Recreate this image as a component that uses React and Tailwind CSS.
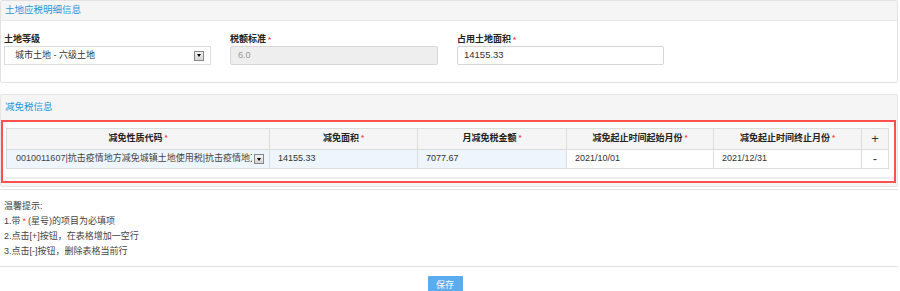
import React from 'react';

const Star = () => <span className="text-[#ff3b3b] ml-[2px] text-[8px] align-top">*</span>;

const DropBtn = () => (
  <span className="inline-flex shrink-0 items-center justify-center w-[10px] h-[10px] border border-[#888] bg-gradient-to-b from-[#f4f4f4] to-[#d4d4d4]">
    <span className="block w-0 h-0 border-l-[2.5px] border-r-[2.5px] border-t-[3px] border-l-transparent border-r-transparent border-t-black" />
  </span>
);

const App = () => {
  const cols = [
    { w: 'w-[263px]', title: '减免性质代码' },
    { w: 'w-[148px]', title: '减免面积' },
    { w: 'w-[149px]', title: '月减免税金额' },
    { w: 'w-[147px]', title: '减免起止时间起始月份' },
    { w: 'w-[148px]', title: '减免起止时间终止月份' },
  ];

  return (
    <div className="w-[900px] h-[291px] overflow-hidden bg-white text-[9px] text-[#333] font-['Liberation_Sans','Noto_Sans_CJK_SC',sans-serif]">
      {/* 土地应税明细信息 */}
      <div className="w-[898px] h-[83px] border border-[#e3e3e3] rounded-[2px]">
        <div className="h-[20px] bg-[#f5f5f5] border-b border-[#e8e8e8] pl-[4px] flex items-center">
          <span className="text-[#1f97dc] text-[9.5px]">土地应税明细信息</span>
        </div>
        <div className="flex pl-[3px] pt-[13px] gap-[19px]">
          <div className="w-[207px]">
            <div className="h-[11px] leading-[11px] text-[#222] font-bold">土地等级</div>
            <div className="mt-[1px] h-[19px] border border-[#ddd] flex items-center justify-between pl-[10px] pr-[6px]">
              <span>城市土地 - 六级土地</span>
              <DropBtn />
            </div>
          </div>
          <div className="w-[208px]">
            <div className="h-[11px] leading-[11px] text-[#222] font-bold">税额标准<Star /></div>
            <div className="mt-[1px] h-[19px] border border-[#d6d6d6] bg-[#eeeeee] rounded-[2px] flex items-center pl-[7px] text-[#999]">6.0</div>
          </div>
          <div className="w-[207px]">
            <div className="h-[11px] leading-[11px] text-[#222] font-bold">占用土地面积<Star /></div>
            <div className="mt-[1px] h-[19px] border border-[#d6d6d6] rounded-[2px] flex items-center pl-[6px] text-[9.5px]">14155.33</div>
          </div>
        </div>
      </div>

      {/* 减免税信息 */}
      <div className="mt-[11px] w-[898px] h-[93px] border border-[#e6e6e6] bg-[#f5f5f5] rounded-[2px]">
        <div className="h-[25px] pl-[4px] flex items-center">
          <span className="text-[#1f97dc] text-[9.5px]">减免税信息</span>
        </div>
        <div className="w-[895px] h-[63px] border-2 border-[#ff5050] bg-white pt-[6px] pl-[3px]">
          <table className="border-collapse border border-[#dcdcdc] w-[883px] table-fixed">
            <thead>
              <tr className="h-[21px] bg-[#f5f5f5]">
                {cols.map((c) => (
                  <th key={c.title} className={`${c.w} border border-[#dcdcdc] font-bold text-[#222] text-center p-0`}>
                    {c.title}<Star />
                  </th>
                ))}
                <th className="w-[27px] border border-[#dcdcdc] text-[13px] font-normal text-[#333] p-0">+</th>
              </tr>
            </thead>
            <tbody>
              <tr className="h-[17px]">
                <td className="border border-[#dcdcdc] bg-[#eef5fc] p-0 pl-[9px] pr-[3px]">
                  <div className="flex items-center gap-[2px]">
                    <span className="block overflow-hidden whitespace-nowrap w-[236px] text-[#444]">0010011607|抗击疫情地方减免城镇土地使用税|抗击疫情地方减免</span>
                    <DropBtn />
                  </div>
                </td>
                <td className="border border-[#dcdcdc] bg-[#eef5fc] p-0 pl-[8px]">14155.33</td>
                <td className="border border-[#dcdcdc] bg-[#eef5fc] p-0 pl-[8px]">7077.67</td>
                <td className="border border-[#dcdcdc] p-0 pl-[8px]">2021/10/01</td>
                <td className="border border-[#dcdcdc] p-0 pl-[8px]">2021/12/31</td>
                <td className="border border-[#dcdcdc] p-0 text-center text-[12px]">-</td>
              </tr>
            </tbody>
          </table>
          <div className="mt-[8px] h-[2px] bg-[#eeeeee]" />
        </div>
      </div>

      {/* 温馨提示 */}
      <div className="mt-[2px] w-[898px] h-[78px] border-t border-b border-[#e3e3e3] pl-[4px] pt-[9px] text-[#444] leading-[15px]">
        <div>温馨提示:</div>
        <div>1.带<span className="text-[#ff3b3b] mx-[2px]">*</span>(星号)的项目为必填项</div>
        <div>2.点击[+]按钮，在表格增加一空行</div>
        <div>3.点击[-]按钮，删除表格当前行</div>
      </div>

      <div className="flex justify-center pt-[9px]">
        <button className="ml-[-10px] w-[35px] h-[20px] bg-[#5aabf0] text-white text-[9px] rounded-[1px]">保存</button>
      </div>
    </div>
  );
};

export default App;
